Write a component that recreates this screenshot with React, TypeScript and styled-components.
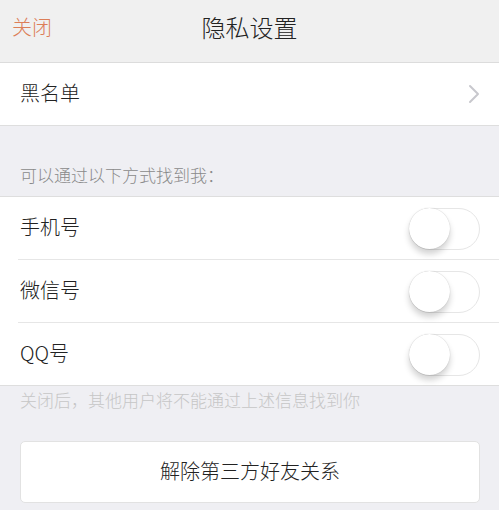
import React, { useState } from 'react';
import styled, { createGlobalStyle } from 'styled-components';

const GlobalStyle = createGlobalStyle`
  html, body {
    margin: 0;
    padding: 0;
    background: #efeff3;
  }
  body {
    font-family: "Noto Sans CJK SC", "Noto Sans", "Liberation Sans", sans-serif;
    font-weight: 300;
    color: #222;
  }
`;

const Page = styled.div`
  width: 499px;
  min-height: 510px;
  background: #efeff3;
`;

const Header = styled.div`
  height: 62px;
  display: grid;
  grid-template-columns: 80px 1fr 80px;
  align-items: center;
  background: #f0f0f0;
  border-bottom: 1px solid #dcdcdc;
`;

const CloseBtn = styled.span`
  padding-left: 12px;
  font-size: 20px;
  color: #dc7e58;
  margin-top: -9px;
`;

const Title = styled.h1`
  margin: -9px 0 0;
  text-align: center;
  font-size: 24px;
  font-weight: 300;
  color: #222;
`;

const Group = styled.div<{ $top?: boolean }>`
  background: #fff;
  border-bottom: 1px solid #dedede;
  border-top: ${(p) => (p.$top ? '1px solid #dedede' : 'none')};
`;

const Row = styled.div<{ $last?: boolean }>`
  height: 62px;
  margin-left: 18px;
  padding-right: 19px;
  display: flex;
  align-items: center;
  justify-content: space-between;
  border-bottom: ${(p) => (p.$last ? 'none' : '1px solid #e6e6e6')};
`;

const Label = styled.span`
  padding-left: 2px;
  margin-top: -4px;
  font-size: 20px;
  color: #222;
`;

const Chevron = () => (
  <svg width="12" height="20" viewBox="0 0 12 20">
    <path d="M2 2l8 8-8 8" fill="none" stroke="#c8c8cd" strokeWidth="2" strokeLinecap="round" strokeLinejoin="round" />
  </svg>
);

const SectionLabel = styled.div`
  height: 70px;
  display: flex;
  align-items: flex-end;
  padding: 0 20px 9px;
  box-sizing: border-box;
  font-size: 17px;
  color: #8a8a8a;
`;

const Note = styled.div`
  padding: 3px 20px 0;
  font-size: 17px;
  line-height: 22px;
  color: #c6c6c6;
`;

const Track = styled.button<{ $on: boolean }>`
  position: relative;
  width: 71px;
  height: 42px;
  border-radius: 21px;
  border: 1.5px solid ${(p) => (p.$on ? '#4cd964' : '#e6e6e6')};
  background: ${(p) => (p.$on ? '#4cd964' : '#fff')};
  padding: 0;
  cursor: pointer;
  margin-top: 2px;
`;

const Knob = styled.span<{ $on: boolean }>`
  position: absolute;
  top: -1px;
  left: ${(p) => (p.$on ? '29px' : '-1px')};
  width: 41px;
  height: 41px;
  border-radius: 50%;
  background: #fff;
  box-shadow: 0 5px 6px rgba(0, 0, 0, 0.18), 0 0 1px rgba(0, 0, 0, 0.25);
`;

const Toggle = ({ on, onClick }: { on: boolean; onClick: () => void }) => (
  <Track $on={on} onClick={onClick}>
    <Knob $on={on} />
  </Track>
);

const ActionButton = styled.button`
  display: block;
  width: 460px;
  height: 62px;
  margin: 30px 20px 0;
  padding-bottom: 4px;
  background: #fff;
  border: 1px solid #e2e2e2;
  border-radius: 5px;
  font-family: inherit;
  font-weight: 300;
  font-size: 20px;
  color: #222;
`;

const App = () => {
  const [toggles, setToggles] = useState<boolean[]>([false, false, false]);
  const flip = (i: number) => setToggles(toggles.map((t, j) => (j === i ? !t : t)));
  const items = ['手机号', '微信号', 'QQ号'];

  return (
    <>
      <GlobalStyle />
      <Page>
        <Header>
          <CloseBtn>关闭</CloseBtn>
          <Title>隐私设置</Title>
          <span />
        </Header>
        <Group>
          <Row $last>
            <Label>黑名单</Label>
            <Chevron />
          </Row>
        </Group>
        <SectionLabel>可以通过以下方式找到我：</SectionLabel>
        <Group $top>
          {items.map((name, i) => (
            <Row key={name} $last={i === items.length - 1}>
              <Label>{name}</Label>
              <Toggle on={toggles[i]} onClick={() => flip(i)} />
            </Row>
          ))}
        </Group>
        <Note>关闭后，其他用户将不能通过上述信息找到你</Note>
        <ActionButton>解除第三方好友关系</ActionButton>
      </Page>
    </>
  );
};

export default App;
